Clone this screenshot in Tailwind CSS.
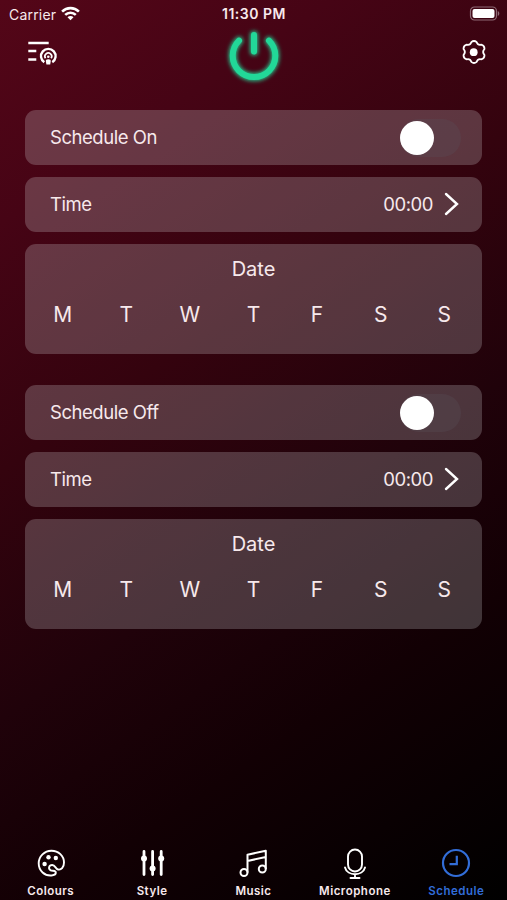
<!DOCTYPE html>
<html lang="en">
<head>
  <meta charset="UTF-8" />
  <meta name="viewport" content="width=device-width, initial-scale=1.0"/>
  <title>Schedule</title>
  <script src="https://cdn.jsdelivr.net/npm/@tailwindcss/browser@4"></script>
</head>
<body class="bg-black">
  <div class="w-[507px] h-[900px] flex flex-col overflow-hidden text-[#f7e9ec] font-['Inter',sans-serif] bg-[linear-gradient(146deg,#540618_0%,#460415_18%,#34030e_38%,#20020a_58%,#120004_75%,#000000_100%)]">

    <!-- Status bar -->
    <div class="h-7 shrink-0 grid grid-cols-3 items-center pl-[9px] pr-[7px] text-[14px]">
      <div class="flex items-center gap-[5px]">
        <span class="tracking-[0.2px]">Carrier</span>
        <svg class="w-[19px] h-[15px] -mt-[2px]" viewBox="0 0 19 15" fill="none" stroke="#fff" stroke-width="2.6">
          <path d="M1.1 5.6a12 12 0 0 1 16.8 0M4.2 8.9a7.6 7.6 0 0 1 10.6 0"/>
          <path d="M9.5 14.2L6.500 11.200a4.200 4.200 0 0 1 6 0z" fill="#fff" stroke="none"/>
        </svg>
      </div>
      <span class="text-center font-semibold whitespace-nowrap tracking-[0.5px] -ml-[1px] -mt-px">11:30 PM</span>
      <svg class="w-[31px] h-[15px] justify-self-end -mt-[2px]" viewBox="0 0 31 15">
        <rect x="1.500" y="1" width="26" height="13" rx="4" fill="none" stroke="#8d6974" stroke-width="1.200"/>
        <rect x="3.500" y="3" width="22" height="9" rx="2" fill="#fff"/>
        <path d="M28.800 5v5c2-.8 2-4.200 0-5z" fill="#8d6974"/>
      </svg>
    </div>

    <!-- Header -->
    <header class="h-[82px] shrink-0 grid grid-cols-3 items-start pl-7 pr-[20px]">
      <svg class="w-[30px] h-6 mt-[13px]" viewBox="0 0 30 24" fill="none" stroke="#fff" stroke-width="2.400">
        <path d="M0.300 2H20.700M0.300 10H8.300M0.300 18.500H8.300"/>
        <path d="M16.300 21.300A7.300 7.300 0 1 1 24.300 21.300"/>
        <path d="M17.500 17.300A3.400 3.400 0 1 1 23.100 17.300" stroke-width="1.700"/>
        <circle cx="20.300" cy="15.800" r="1.300" fill="#fff" stroke="none"/>
        <path d="M20.300 18.200c2 0 2.700.8 2.400 2.200l-.5 3h-3.800l-.5-3c-.3-1.400.4-2.200 2.400-2.200z" fill="#fff" stroke="none"/>
      </svg>
      <svg class="w-16 h-16 -mt-[4px] justify-self-center -translate-x-[4px]" viewBox="0 0 64 64" fill="none" stroke="#22d898" stroke-width="6" stroke-linecap="round">
        <defs>
          <filter id="glow" x="-30%" y="-30%" width="160%" height="160%"><feGaussianBlur stdDeviation="2"/></filter>
        </defs>
        <g filter="url(#glow)">
          <path d="M17 16.700A21.300 21.300 0 1 0 47 16.700M32 11V27.500" stroke-width="7.500"/>
        </g>
        <path d="M17 16.700A21.300 21.300 0 1 0 47 16.700M32 11V27.500"/>
      </svg>
      <svg class="w-[26px] h-[26px] mt-[11px] justify-self-end" viewBox="0 0 26 26" fill="none" stroke="#fff" stroke-width="1.800" stroke-linejoin="round">
        <path d="M10.300 3.200Q13 .8 15.700 3.200C16.600 5.600 18 6.300 20.200 5.700Q23.800 6.600 23.400 10.200C21.600 12.200 21.600 13.800 23.400 15.800Q23.800 19.400 20.200 20.300C18 19.700 16.600 20.400 15.700 22.800Q13 25.200 10.300 22.800C9.400 20.400 8 19.700 5.800 20.300Q2.200 19.400 2.600 15.800C4.400 13.800 4.400 12.200 2.600 10.200Q2.200 6.600 5.800 5.700C8 6.300 9.400 5.600 10.300 3.200z"/>
        <circle cx="12.700" cy="13.200" r="3.900" fill="#fff" stroke="none"/>
      </svg>
    </header>

    <!-- Schedule cards -->
    <main class="flex-1 flex flex-col gap-[31px] pl-[25px] pr-[25px]">
      <section class="flex flex-col gap-3 text-[18.500px] tracking-[-0.450px]">
        <div class="h-[55px] rounded-[11px] bg-[#d8d8dc]/24 flex items-center justify-between pl-[25px] pr-[21px]">
          <span>Schedule On</span>
          <div class="w-[61px] h-[38px] rounded-full bg-[#58505a]/30 flex items-center">
            <div class="size-[34px] rounded-full bg-white"></div>
          </div>
        </div>
        <div class="h-[55px] rounded-[11px] bg-[#d8d8dc]/24 flex items-center justify-between pl-[25px] pr-[23px]">
          <span>Time</span>
          <div class="flex items-center gap-[11px]">
            <span>00:00</span>
            <svg class="w-[15px] h-6 -mt-[1px]" viewBox="0 0 15 24" fill="none" stroke="#fff" stroke-width="2.400" stroke-linecap="round"><path d="M2 2L13 12L2 22"/></svg>
          </div>
        </div>
        <div class="h-[110px] rounded-[11px] bg-[#d8d8dc]/24 px-[6px] pt-[10px] tracking-normal">
          <h2 class="text-center text-[20px] leading-[30px]">Date</h2>
          <div class="grid grid-cols-7 text-center text-[21px] leading-[30px] mt-4">
            <span>M</span><span>T</span><span>W</span><span>T</span><span>F</span><span>S</span><span>S</span>
          </div>
        </div>
      </section>

      <section class="flex flex-col gap-3 text-[18.500px] tracking-[-0.450px]">
        <div class="h-[55px] rounded-[11px] bg-[#d8d8dc]/24 flex items-center justify-between pl-[25px] pr-[21px]">
          <span>Schedule Off</span>
          <div class="w-[61px] h-[38px] rounded-full bg-[#58505a]/30 flex items-center">
            <div class="size-[34px] rounded-full bg-white"></div>
          </div>
        </div>
        <div class="h-[55px] rounded-[11px] bg-[#d8d8dc]/24 flex items-center justify-between pl-[25px] pr-[23px]">
          <span>Time</span>
          <div class="flex items-center gap-[11px]">
            <span>00:00</span>
            <svg class="w-[15px] h-6 -mt-[1px]" viewBox="0 0 15 24" fill="none" stroke="#fff" stroke-width="2.400" stroke-linecap="round"><path d="M2 2L13 12L2 22"/></svg>
          </div>
        </div>
        <div class="h-[110px] rounded-[11px] bg-[#d8d8dc]/24 px-[6px] pt-[10px] tracking-normal">
          <h2 class="text-center text-[20px] leading-[30px]">Date</h2>
          <div class="grid grid-cols-7 text-center text-[21px] leading-[30px] mt-4">
            <span>M</span><span>T</span><span>W</span><span>T</span><span>F</span><span>S</span><span>S</span>
          </div>
        </div>
      </section>
    </main>

    <!-- Tab bar -->
    <nav class="h-[53px] shrink-0 grid grid-cols-5 text-[11.500px] leading-[14px] font-semibold tracking-[0.500px]">
      <a class="flex flex-col items-center gap-[5px]">
        <svg class="size-8" viewBox="0 0 32 32" fill="none" stroke="#fff" stroke-width="1.900" stroke-linejoin="round">
          <path d="M17.500 28.300C9.500 29.500 3.700 23.500 3.700 16.300A12.700 12.700 0 0 1 16.500 3.700C23.500 3.700 29 9 29 15.500C29 20.500 26 23.300 23 22.500C20.500 21.800 20.300 18 17.200 18C14 18 12.800 21.800 15.700 23.300C17.500 24.200 21 23.300 20.800 25.800C20.700 27.300 19 28 17.500 28.300z"/>
          <g fill="#fff" stroke="none"><circle cx="9.600" cy="17" r="2.200"/><circle cx="13.500" cy="10.200" r="2.200"/><circle cx="20.800" cy="11" r="2.200"/></g>
        </svg>
        <span>Colours</span>
      </a>
      <a class="flex flex-col items-center gap-[5px]">
        <svg class="size-8" viewBox="0 0 32 32" fill="none" stroke="#fff" stroke-width="2.800" stroke-linecap="round">
          <path d="M8 4.500V27.500M16.600 4.500V27.500M25.200 4.500V27.500"/>
          <g fill="#fff" stroke="none"><circle cx="8" cy="11.500" r="3"/><circle cx="16.600" cy="21.500" r="3"/><circle cx="25.200" cy="11.500" r="3"/></g>
        </svg>
        <span>Style</span>
      </a>
      <a class="flex flex-col items-center gap-[5px]">
        <svg class="size-8" viewBox="0 0 32 32" fill="none" stroke="#fff" stroke-width="2" stroke-linejoin="round">
          <path d="M10.500 25.500V7.700L28.800 3.800V22M10.500 14L28.800 10"/>
          <circle cx="7" cy="25.500" r="3.500"/><circle cx="25.300" cy="22" r="3.500"/>
        </svg>
        <span>Music</span>
      </a>
      <a class="flex flex-col items-center gap-[5px]">
        <svg class="size-8" viewBox="0 0 32 32" fill="none" stroke="#fff" stroke-width="1.900" stroke-linecap="round">
          <rect x="9" y="2.500" width="14" height="22" rx="7"/>
          <path d="M6 20.500C8.200 29.500 23.800 29.500 26 20.500M16 27.500V31M11.500 31H20.500"/>
        </svg>
        <span>Microphone</span>
      </a>
      <a class="flex flex-col items-center gap-[5px] text-[#326dd8]">
        <svg class="size-8" viewBox="0 0 32 32" fill="none" stroke="#326dd8" stroke-width="2.200">
          <circle cx="16" cy="16" r="13"/><path d="M16.800 8.800V17.200H9.500"/>
        </svg>
        <span>Schedule</span>
      </a>
    </nav>
  </div>
</body>
</html>
